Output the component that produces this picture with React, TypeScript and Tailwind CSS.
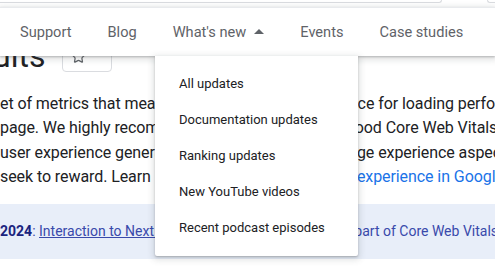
import { Star } from "lucide-react";

const navItems = ["Support", "Blog", "What's new", "Events", "Case studies"];

const menuItems = [
  "All updates",
  "Documentation updates",
  "Ranking updates",
  "New YouTube videos",
  "Recent podcast episodes",
];

export default function App() {
  return (
    <div
      className="relative w-[495px] h-[276px] overflow-hidden bg-white text-[#202124]"
      style={{ fontFamily: "Roboto, 'Liberation Sans', sans-serif" }}
    >
      {/* top strip (search box edges) */}
      <div className="flex h-[7px]">
        <div className="w-[442px] h-[3px] border-b border-r border-[#dadce0] rounded-br-[4px]" />
        <div className="ml-[45px] flex-1 h-[3px] border-b border-l border-[#dadce0] rounded-bl-[4px]" />
      </div>

      {/* nav */}
      <div className="relative z-10 h-[49px] bg-white border-t border-[#e8eaed] shadow-[0_1px_2px_rgba(60,64,67,0.3),0_2px_6px_2px_rgba(60,64,67,0.15)]">
        <div className="flex items-center h-full pt-[1px] pl-[2px] text-[14.6px] text-[#5f6368]">
          {navItems.map((item) => (
            <div key={item} className="flex items-center px-[18px]">
              <span>{item}</span>
              {item === "What's new" && (
                <svg width="10" height="5" viewBox="0 0 10 5" className="ml-[8px] mb-[2px]">
                  <path d="M0 5 L5 0 L10 5 Z" fill="#5f6368" />
                </svg>
              )}
            </div>
          ))}
        </div>

        {/* dropdown */}
        <div className="absolute left-[155px] top-[48px] w-[203px] bg-white py-[10px] rounded-b-[2px] shadow-[0_1px_2px_rgba(60,64,67,0.3),0_2px_6px_2px_rgba(60,64,67,0.15)]">
          {menuItems.map((m) => (
            <div key={m} className="h-9 flex items-center pl-6 text-[13px] text-[#202124]">
              {m}
            </div>
          ))}
        </div>
      </div>

      {/* content */}
      <div className="-mt-[16px]">
        <div className="flex items-center h-8 -ml-[51px]">
          <h1 className="text-[32px] leading-8 text-[#202124]">results</h1>
          <button className="ml-[17px] h-8 w-[50px] flex items-center pl-[8px] border border-[#dadce0] rounded-[4px]">
            <Star className="w-[15px] h-[15px] text-[#5f6368]" strokeWidth={2} />
          </button>
        </div>

        <div className="mt-[20px] text-[16px] leading-[24.4px] tracking-[-0.08px] whitespace-nowrap text-[#202124]">
          <p>et of metrics that measure real-world user experience for loading performance, interactivity</p>
          <p>page. We highly recommend site owners achieve good Core Web Vitals for success with Search</p>
          <p>user experience generally. This, along with other page experience aspects, aligns with</p>
          <p>
            seek to reward. Learn more about{" "}
            <a className="text-[#1a73e8]">measuring page experience in Google Search</a>.
          </p>
        </div>

        <div className="mt-[14px] h-[55px] flex items-center bg-[#e8eef9] text-[14px] text-[#3949ab] whitespace-nowrap">
          <span className="font-bold text-[#1a237e]">2024</span>
          <span>:&nbsp;</span>
          <a className="underline">Interaction to Next Paint (INP)</a>
          <span>&nbsp;has replaced FID as part of Core Web Vitals</span>
        </div>
      </div>
    </div>
  );
}
